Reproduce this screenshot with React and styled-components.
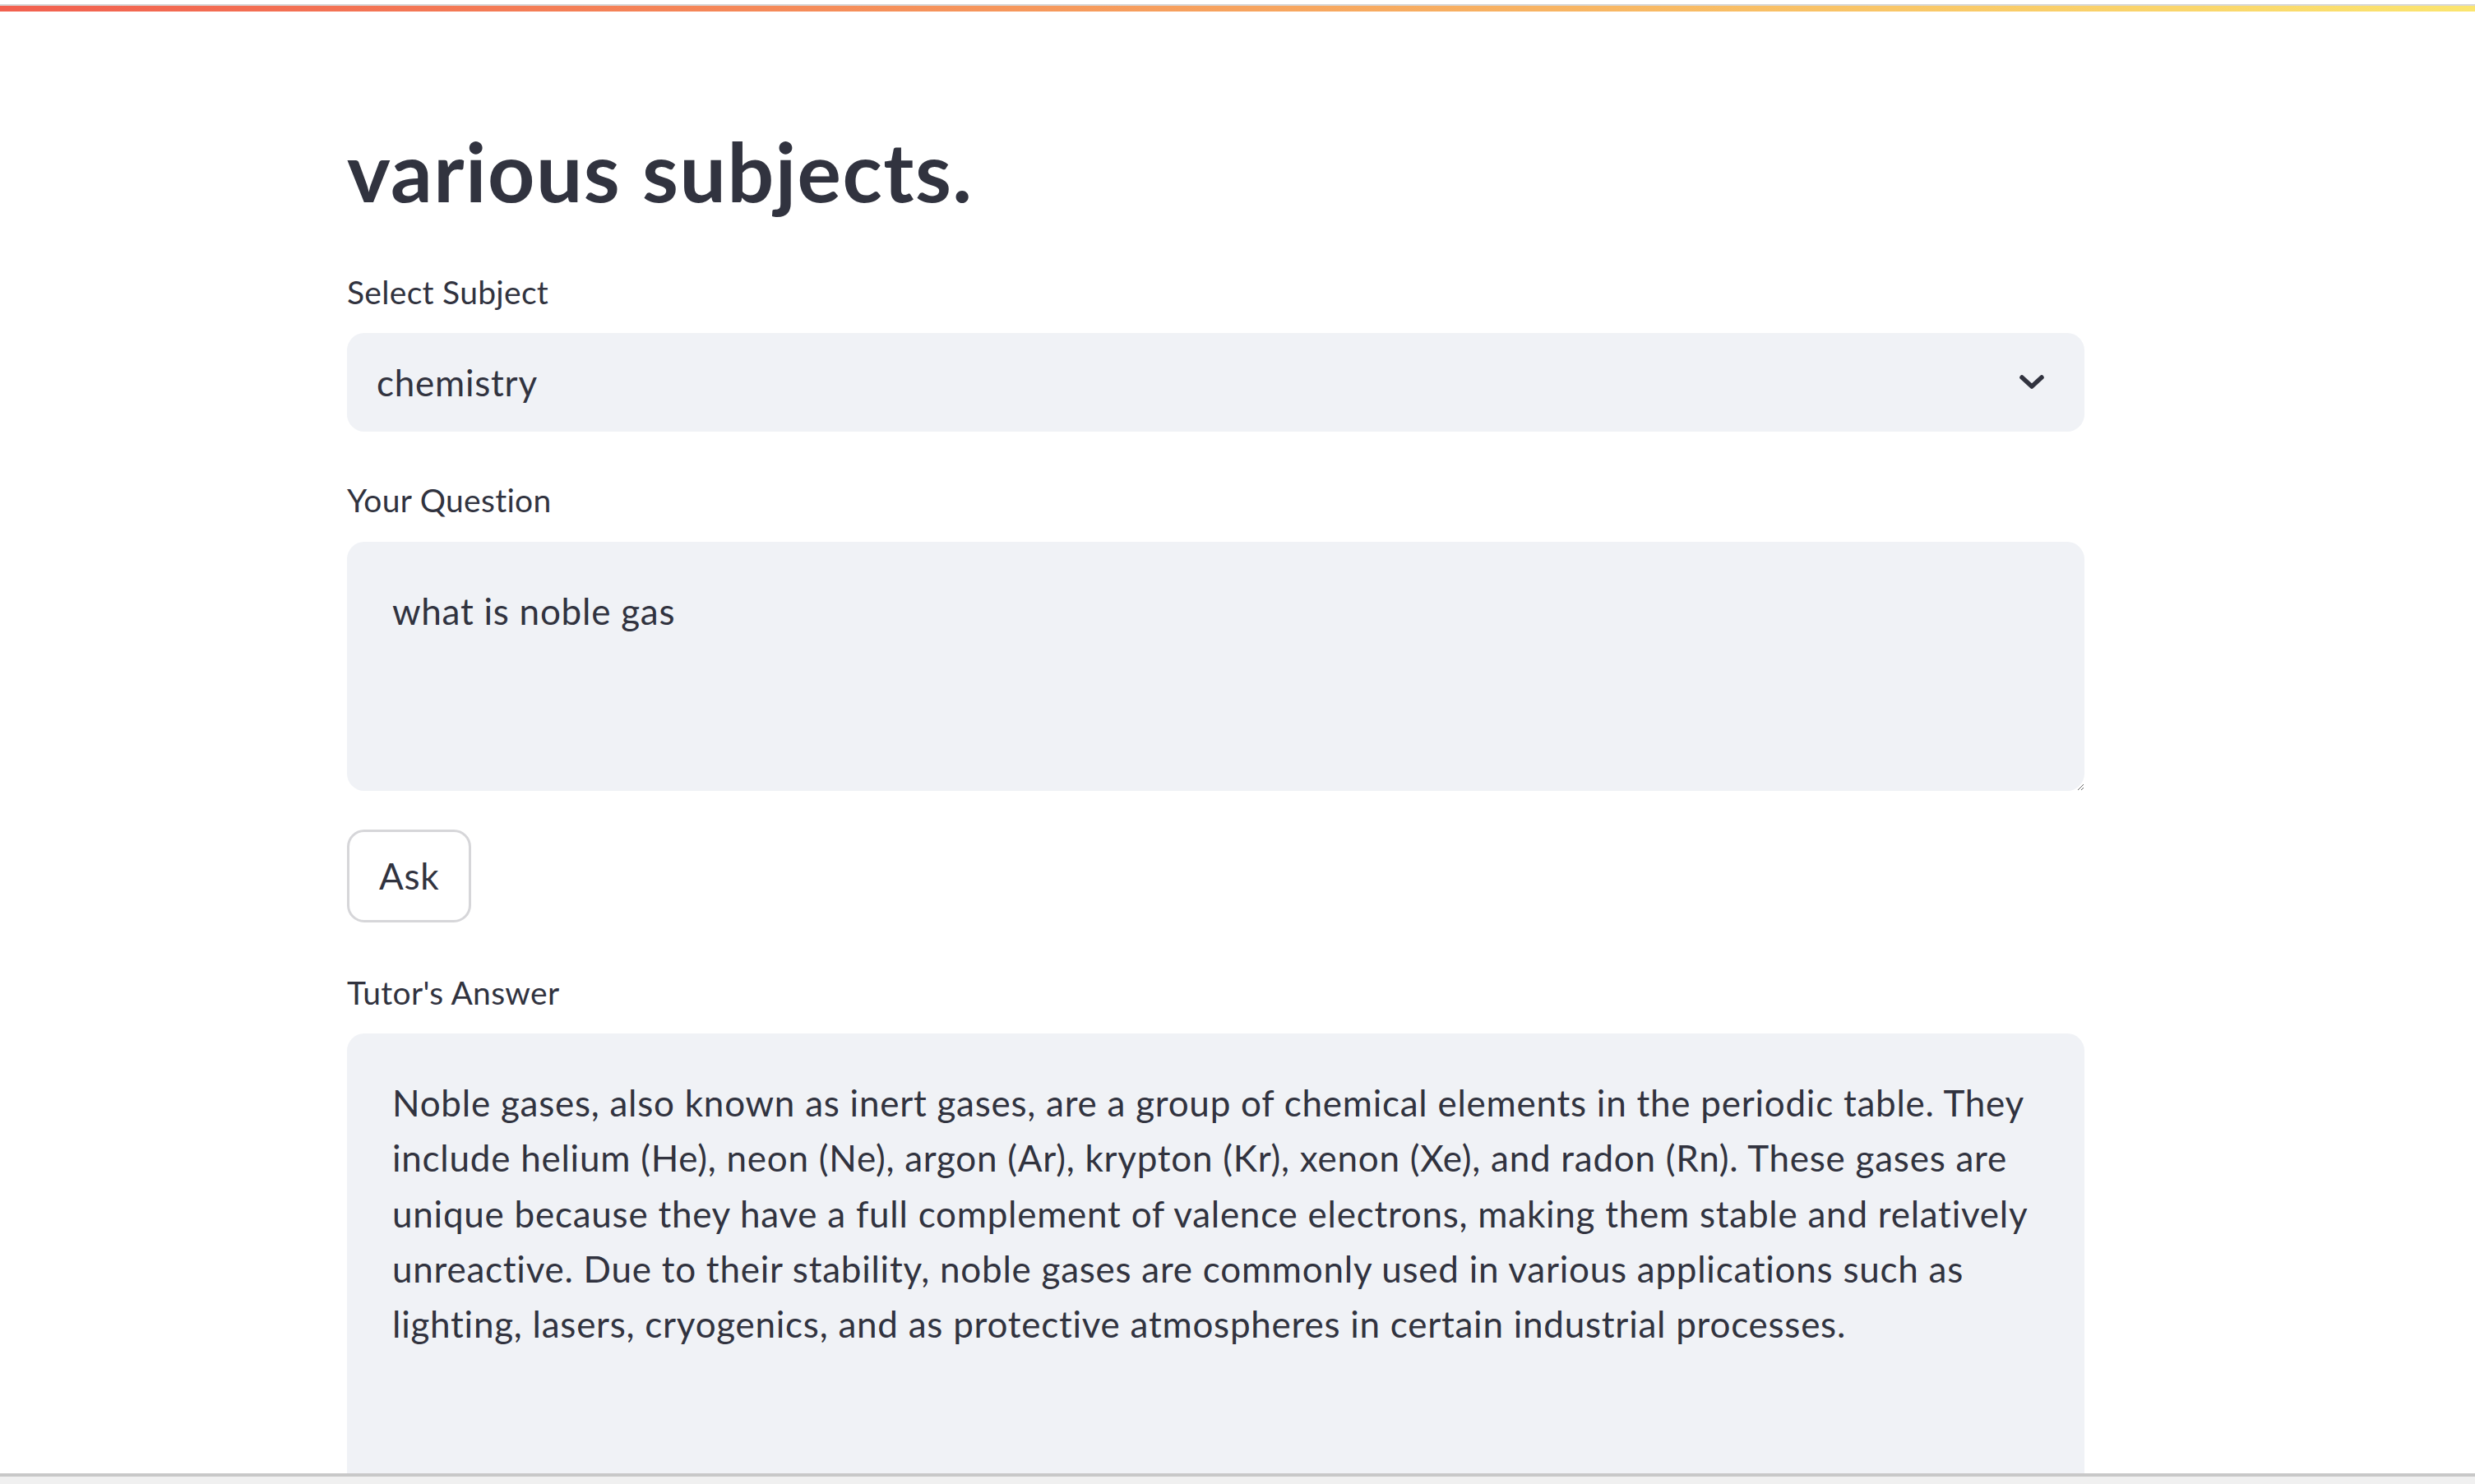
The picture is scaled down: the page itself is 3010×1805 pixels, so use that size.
import React from "react";
import styled, { createGlobalStyle } from "styled-components";

const answer = [
  "Noble gases, also known as inert gases, are a group of chemical elements in the periodic table. They",
  "include helium (He), neon (Ne), argon (Ar), krypton (Kr), xenon (Xe), and radon (Rn). These gases are",
  "unique because they have a full complement of valence electrons, making them stable and relatively",
  "unreactive. Due to their stability, noble gases are commonly used in various applications such as",
  "lighting, lasers, cryogenics, and as protective atmospheres in certain industrial processes.",
].join("\n");

const App = () => {
  return (
    <Page>
      <GlobalStyle />
      <Decoration />
      <Main>
        <Block>
          <Title>various subjects.</Title>

          <Field>
            <Label>Select Subject</Label>
            <Select>
              <span>chemistry</span>
              <svg width="32" height="20" viewBox="0 0 32 20">
                <polyline
                  points="4,4 16,15 28,4"
                  fill="none"
                  stroke="#31333f"
                  strokeWidth="5.5"
                  strokeLinecap="round"
                  strokeLinejoin="round"
                />
              </svg>
            </Select>
          </Field>

          <Field>
            <Label>Your Question</Label>
            <TextArea readOnly value="what is noble gas" height={303} />
          </Field>

          <Field>
            <Button>Ask</Button>
          </Field>

          <Field>
            <Label>Tutor's Answer</Label>
            <TextArea readOnly wrap="off" value={answer} height={640} />
          </Field>
        </Block>
      </Main>
      <BottomBar />
    </Page>
  );
};

const GlobalStyle = createGlobalStyle`
  html, body {
    margin: 0;
    padding: 0;
    background: #fff;
  }
  body {
    font-family: "Lato", "Liberation Sans", sans-serif;
    color: #31333f;
  }
`;

const Page = styled.div`
  display: flex;
  flex-direction: column;
  height: 100vh;
  overflow: hidden;
`;

const Decoration = styled.div`
  flex: none;
  margin-top: 5px;
  height: 7px;
  border-top: 2px solid #d8d8d8;
  background: linear-gradient(90deg, #f2604f 0%, #f7a35e 50%, #fbe56f 100%);
`;

const Main = styled.main`
  flex: 1;
  overflow: hidden;
`;

const Block = styled.div`
  width: 2113px;
  margin-left: 422px;
  padding-top: 133px;
  display: flex;
  flex-direction: column;
`;

const Title = styled.h1`
  margin: 0 0 57px;
  font-size: 100px;
  font-weight: 700;
  line-height: 1.2;
  letter-spacing: 1.5px;
  color: #31333f;
`;

const Field = styled.div`
  display: flex;
  flex-direction: column;
  align-items: flex-start;
  margin-bottom: 52px;
`;

const Label = styled.label`
  font-size: 39px;
  line-height: 1.6;
  letter-spacing: 0.3px;
  margin-bottom: 19px;
  color: #31333f;
`;

const Select = styled.div`
  box-sizing: border-box;
  width: 100%;
  height: 120px;
  padding: 0 48px 0 36px;
  display: flex;
  align-items: center;
  justify-content: space-between;
  background: #f0f2f6;
  border-radius: 21px;
  font-size: 44px;
  letter-spacing: 0.75px;
  color: #31333f;
`;

const TextArea = styled.textarea`
  box-sizing: border-box;
  display: block;
  width: 100%;
  height: ${(p) => p.height}px;
  padding: 51px 55px 20px;
  border: none;
  outline: none;
  border-radius: 21px;
  background: #f0f2f6;
  color: #31333f;
  font-family: "Lato", "Liberation Sans", sans-serif;
  font-size: 44px;
  letter-spacing: 0.75px;
  line-height: 67.2px;
  resize: vertical;
  overflow: hidden;
`;

const Button = styled.button`
  box-sizing: border-box;
  height: 113px;
  padding: 0 36px;
  border: 3px solid #d6d6d9;
  border-radius: 21px;
  background: #fff;
  color: #31333f;
  font-family: "Lato", "Liberation Sans", sans-serif;
  font-size: 44px;
  letter-spacing: 0.75px;
  margin-top: -5px;
  margin-bottom: 2px;
`;

const BottomBar = styled.div`
  flex: none;
  height: 9px;
  border-top: 4px solid #c8c8c8;
  background: #f0f0f0;
`;

export default App;
